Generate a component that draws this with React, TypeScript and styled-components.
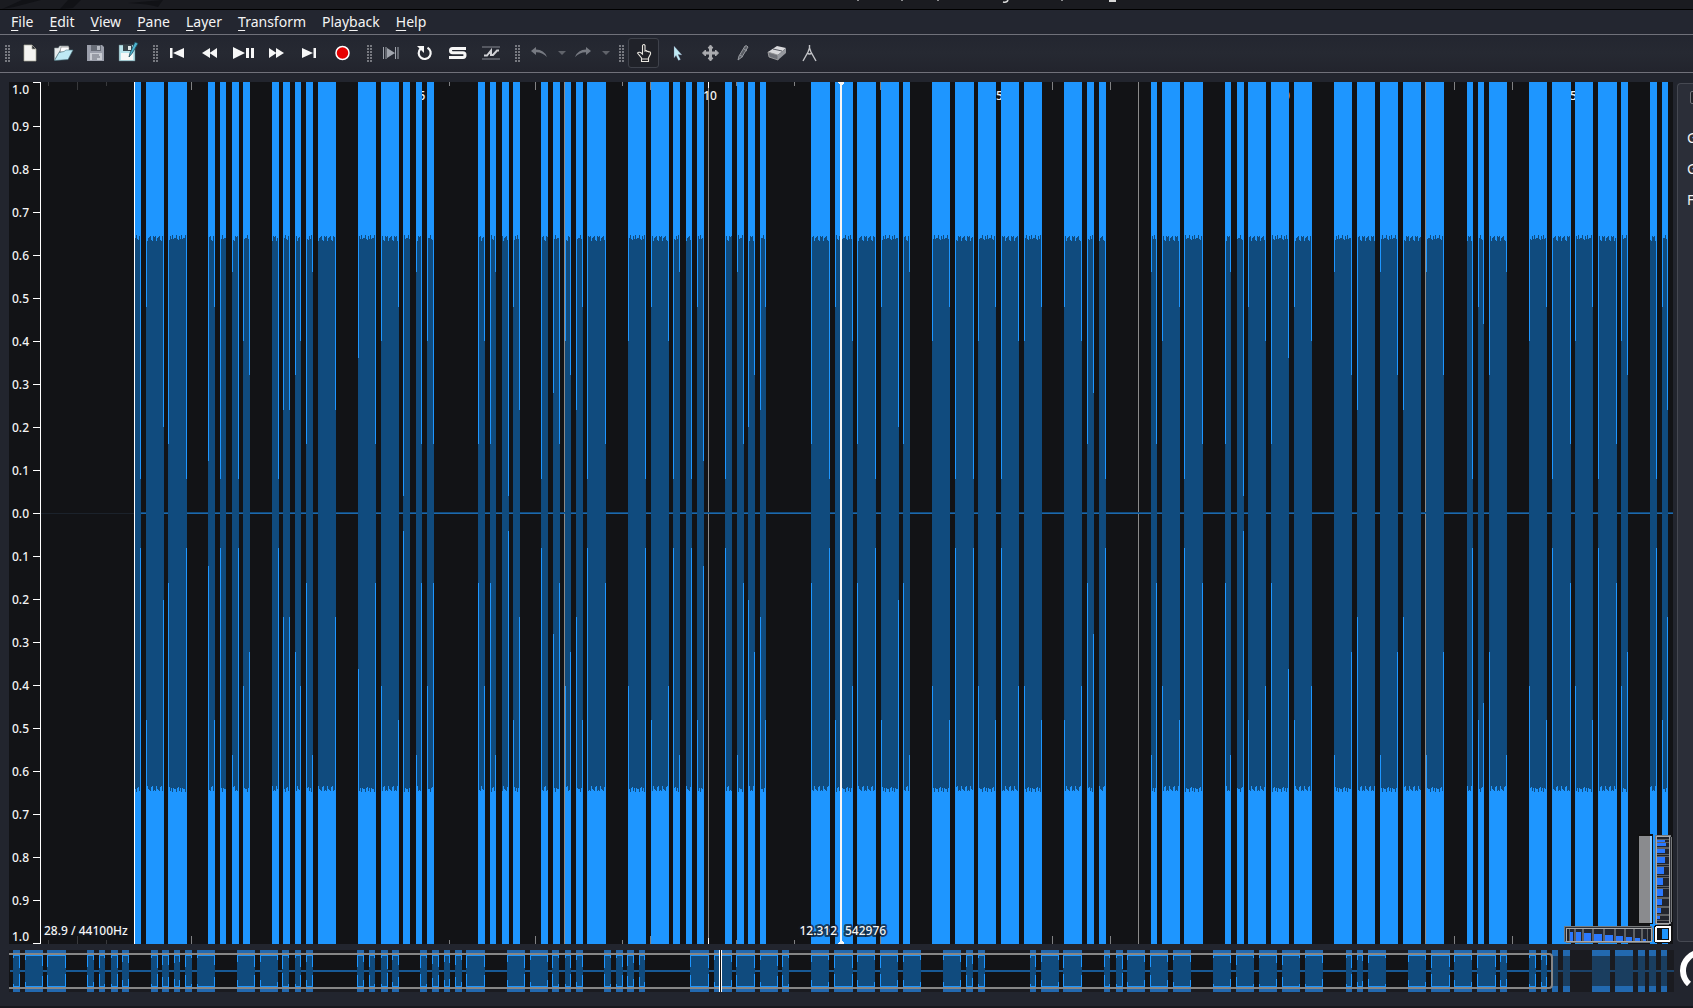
import React from "react";
import styled, { createGlobalStyle } from "styled-components";

const Global = createGlobalStyle`
  * { box-sizing: border-box; }
  body { margin: 0; background: #22252e; overflow: hidden; font-family: "Noto Sans", "Open Sans", sans-serif; color: #f4f4f4; }
  button { font: inherit; color: inherit; background: none; border: 0; padding: 0; margin: 0; }
  svg { display: block; }
`;

const Shell = styled.div`
  display: flex;
  flex-direction: column;
  height: 100vh;
  background: #22252e;
  border-bottom: 2px solid #17181e;
  overflow: hidden;
`;

const TitleStrip = styled.div`
  flex: none;
  height: 10px;
  background: #1a1b20;
  border-bottom: 1px solid #000;
  overflow: hidden;
`;

const MenuBar = styled.nav`
  flex: none;
  display: flex;
  align-items: center;
  height: 25px;
  padding-left: 3px;
  background: #232630;
  border-bottom: 1px solid #70717a;
`;

const MenuItem = styled.button`
  padding: 0 8px;
  font-size: 14px;
  line-height: 20px;
  text-underline-offset: 3px;
`;

const Mnemonic = styled.span`
  text-decoration: underline;
  text-decoration-thickness: 1px;
`;

const Toolbar = styled.div`
  flex: none;
  display: flex;
  align-items: center;
  height: 38px;
  padding-bottom: 1px;
  background: linear-gradient(#232630, #262932 50%, #22242d);
  border-bottom: 1px solid #70717a;
`;

const Grip = styled.div<{ $first?: boolean }>`
  width: ${(p) => (p.$first ? 13 : 16)}px;
  height: 16px;
  padding-right: 3px;
  display: flex;
  justify-content: flex-end;
`;

const ToolButton = styled.button<{ $narrow?: boolean; $checked?: boolean }>`
  display: flex;
  align-items: center;
  justify-content: center;
  width: ${(p) => (p.$narrow ? 11 : p.$checked ? 31 : 33)}px;
  height: 30px;
  margin: 0 ${(p) => (p.$checked ? 1 : 0)}px;
  border: ${(p) => (p.$checked ? "1px solid #3f424b" : "0")};
  border-radius: 3px;
  background: ${(p) => (p.$checked ? "#202229" : "transparent")};
`;

const Workspace = styled.main`
  flex: 1;
  min-height: 0;
  display: flex;
  gap: 4px;
  padding: 9px 0 0 9px;
`;

const Pane = styled.section`
  position: relative;
  flex: 1;
  min-width: 0;
  background: #121316;
`;

const Chart = styled.svg`
  display: block;
  width: 100%;
  height: 100%;
  overflow: visible;
`;

const Wheels = styled.svg`
  position: absolute;
  right: 1px;
  bottom: 0;
`;

const SidePanel = styled.aside`
  flex: none;
  width: 16px;
  margin: 1px 0 2px;
  padding: 7px 0 0 9px;
  border: 1px solid #464952;
  border-right: 0;
  border-radius: 4px 0 0 4px;
  background: #2b2e38;
  overflow: hidden;
`;

const CheckBox = styled.input`
  appearance: none;
  display: block;
  width: 13px;
  height: 13px;
  margin: 0 0 18px 3px;
  border: 1px solid #74767c;
  border-radius: 2px;
  background: #202127;
`;

const PropertyLabel = styled.div`
  font-size: 14px;
  line-height: 31px;
  white-space: nowrap;
`;

const OverviewRow = styled.div`
  flex: none;
  display: flex;
  height: 62px;
  padding: 6px 0 14px 9px;
`;

const Overview = styled.div`
  flex: 1;
  min-width: 0;
  background: #1a1b20;
`;

const Knob = styled.svg`
  flex: none;
`;

/* start, end, and the level (in hundredths) the bright edge reaches on each side */
const segments: number[][] = [
  [135, 141, 64, 8], [146, 164, 48, 20], [168, 187, 16, 8], [208, 215, 12, 48], [220, 226, 8, 64],
  [232, 239, 56, 8], [243, 250, 40, 32], [272, 279, 64, 8], [283, 290, 24, 24], [295, 301, 32, 40],
  [306, 313, 16, 56], [318, 336, 64, 24], [358, 376, 36, 16], [381, 399, 40, 48], [403, 410, 4, 64],
  [416, 422, 56, 16], [427, 434, 40, 16], [478, 485, 16, 40], [490, 496, 16, 56], [502, 509, 64, 4],
  [513, 520, 48, 24], [541, 548, 8, 64], [553, 560, 28, 16], [565, 571, 40, 32], [576, 583, 24, 48],
  [587, 606, 8, 16], [628, 646, 40, 8], [651, 669, 48, 40], [673, 680, 8, 56], [686, 692, 64, 8],
  [697, 704, 48, 12], [725, 732, 8, 64], [737, 744, 56, 16], [748, 755, 20, 32], [760, 766, 24, 48],
  [811, 830, 16, 8], [835, 853, 48, 40], [857, 876, 16, 8], [881, 899, 48, 20], [903, 910, 16, 56],
  [932, 950, 40, 48], [955, 974, 8, 8], [978, 996, 40, 48], [1001, 1019, 8, 40], [1024, 1042, 40, 48],
  [1064, 1082, 48, 40], [1087, 1094, 16, 28], [1099, 1106, 64, 8], [1151, 1157, 56, 16], [1162, 1180, 40, 48],
  [1184, 1203, 8, 16], [1225, 1231, 16, 56], [1237, 1244, 64, 4], [1248, 1266, 48, 40], [1271, 1289, 16, 36],
  [1294, 1312, 48, 40], [1334, 1352, 56, 32], [1357, 1375, 24, 64], [1380, 1398, 56, 32], [1403, 1421, 24, 64],
  [1426, 1444, 56, 32], [1467, 1473, 64, 8], [1478, 1484, 48, 44], [1489, 1507, 32, 56], [1529, 1547, 40, 48],
  [1552, 1571, 8, 16], [1575, 1593, 40, 48], [1598, 1617, 8, 16], [1621, 1628, 40, 32], [1650, 1657, 64, 8],
  [1662, 1668, 48, 24],
];

const tail: number[][] = [
  [1552, 1558], [1563, 1570], [1592, 1610], [1615, 1633], [1638, 1645], [1649, 1656], [1661, 1667],
];

const OVERVIEW_SHIFT = 121;
const ZERO = 513;
const jagA = [3, 0, 4, 5, 1, 4, 0, 4, 3];
const jagB = [2, 1, 6, 3, 2, 1, 5, 6, 1];

function corePath([a, b]: number[], i: number) {
  const jag = i % 2 ? jagB : jagA;
  let top = "";
  let bottom = "";
  for (let x = a; x < b; x++) {
    const d = 235 + jag[(x - a + i) % jag.length];
    top += `V${d}H${x + 1}`;
    bottom = `H${x + 1}V${2 * ZERO - d + 1}` + bottom;
  }
  return `M${a} ${ZERO}${top}V${ZERO}${bottom}H${a}Z`;
}

const ticks: [number, number][] = [
  [48, 4], [77, 8], [106, 4], [191, 8], [449, 4], [535, 8], [622, 4], [650, 8], [736, 4],
  [794, 4], [880, 8], [1052, 8], [1110, 8], [1454, 8], [1512, 8],
];

const seconds: [number, string][] = [[422, "5"], [710, "10"], [996, "15"], [1283, "20"], [1570, "25"]];

const levels = Array.from({ length: 21 }, (_, i) => ({
  y: 83 + 43 * i,
  text: (Math.abs(10 - i) / 10).toFixed(1),
}));

function WavePane() {
  return (
    <Chart viewBox="9 82 1664 862" preserveAspectRatio="none" shapeRendering="crispEdges" fontFamily="Noto Sans" fontSize="12" fontWeight="500" fill="#f4f4f4">
      <rect x="9" y="82" width="1664" height="862" fill="#121316" />
      <rect x="41" y="513" width="93" height="1" fill="#1b222b" />
      {[564, 708, 1138, 1425].map((x) => (
        <rect key={x} x={x} y="82" width="1" height="862" fill="#8a8a8a" />
      ))}
      <rect x="708" y="82" width="1" height="6" fill="#fff" />
      <rect x="708" y="938" width="1" height="6" fill="#fff" />
      {ticks.map(([x, h]) => (
        <g key={x} fill={x < 134 ? "#38393c" : "#808183"}>
          <rect x={x} y="82" width="1" height={h} />
          <rect x={x} y={944 - h} width="1" height={h} />
        </g>
      ))}
      {seconds.map(([x, s]) => (
        <text key={s} x={x} y="100" textAnchor="middle">{s}</text>
      ))}
      <rect x="141" y="512" width="1532" height="1" fill="#124a7b" />
      <rect x="141" y="513" width="1532" height="1" fill="#1d69ad" />
      {segments.map((s, i) => {
        const [a, b, l, r] = s;
        return (
          <g key={a}>
            <rect x={a} y="82" width={b - a} height="862" fill="#1e96ff" />
            <path d={corePath(s, i)} fill="#104b7e" />
            {[[a, l], [b - 1, r]].map(([x, v], k) => {
              if (v >= 64) return null;
              const h = Math.round(278 - v * 4.3);
              return (
                <g key={k} fill="#1e96ff">
                  <rect x={x} y="235" width="1" height={h} />
                  <rect x={x} y={792 - h} width="1" height={h} />
                </g>
              );
            })}
          </g>
        );
      })}
      <rect x="134" y="82" width="1" height="862" fill="#fff" />
      <rect x="40" y="82" width="1" height="862" fill="#fff" />
      {levels.map(({ y, text }, i) => (
        <g key={y}>
          <rect x="33" y={i === 0 ? 82 : y} width="7" height="1" fill="#fff" />
          <text x="12" y={i === 0 ? 94 : i === 20 ? 941 : y + 5}>{text}</text>
        </g>
      ))}
      <rect x="840" y="82" width="2" height="862" fill="#f6f6f6" />
      <path d="M838 82h6v1l-2 2h-2l-2-2zM838 944h6v-1l-2-2h-2l-2 2z" fill="#f6f6f6" />
      <g stroke="#12171f" strokeOpacity="0.7" strokeWidth="4" strokeLinejoin="round" paintOrder="stroke">
        <text x="44" y="935">28.9 / 44100Hz</text>
        <text x="837" y="935" textAnchor="end">12.312</text>
        <text x="845" y="935">542976</text>
      </g>
    </Chart>
  );
}

function OverviewChart() {
  return (
    <Chart viewBox="9 950 1665 42" preserveAspectRatio="none" shapeRendering="crispEdges">
      <rect x="9" y="955" width="1543" height="32" fill="#121316" />
      <rect x="10" y="970" width="1543" height="2" fill="#185a96" />
      <rect x="1552" y="970" width="122" height="2" fill="#1b436b" />
      {segments.map(([a, b, l, r]) => {
        const x = a - OVERVIEW_SHIFT - (a === 135 ? 1 : 0);
        const w = b - OVERVIEW_SHIFT - x;
        return (
          <g key={a}>
            <rect x={x} y="950" width={w} height="42" fill="#2269b0" />
            <rect x={x} y="955" width={w} height="32" fill="#1e96ff" />
            <rect x={x} y="956" width={w} height="30" fill="#104b7e" />
            {[[x, l], [x + w - 1, r]].map(([ex, v], k) => {
              const h = Math.max(3, Math.round(15 - v * 0.21));
              return (
                <g key={k} fill="#1e96ff">
                  <rect x={ex} y="955" width="1" height={h} />
                  <rect x={ex} y={987 - h} width="1" height={h} />
                </g>
              );
            })}
          </g>
        );
      })}
      {tail.map(([a, b]) => (
        <g key={a}>
          <rect x={a} y="950" width={b - a} height="42" fill="#2269b0" />
          <rect x={a} y="956" width={b - a} height="30" fill="#1a3e60" />
        </g>
      ))}
      <path d="M9 954H1549Q1552 954 1552 957V985Q1552 988 1549 988H9" fill="none" stroke="#868686" strokeWidth="2" shapeRendering="auto" />
      <rect x="719" y="950" width="1" height="42" fill="#fff" />
      <rect x="720" y="950" width="1" height="42" fill="#111" />
      <rect x="721" y="950" width="1" height="42" fill="#fff" />
    </Chart>
  );
}

const vCells: number[][] = [[3, 2, 8], [6, 3, 9], [12, 4, 8], [20, 6, 8], [30, 7, 7], [41, 7, 6], [52, 7, 6], [62, 6, 5], [71, 5, 4], [79, 3, 3]];
const hCells: number[][] = [[5, 3, 9], [11, 5, 9], [19, 7, 8], [29, 8, 7], [40, 8, 6], [51, 7, 5], [61, 6, 4], [70, 5, 3], [78, 3, 2]];

function ThumbWheels() {
  return (
    <Wheels width="110" height="110" viewBox="1562 834 110 110" shapeRendering="crispEdges" role="img" aria-label="Zoom wheels">
      <rect x="1638" y="834" width="15" height="90" fill="#111" />
      <rect x="1639" y="836" width="13" height="87" fill="#8a8b8e" />
      <rect x="1650" y="836" width="2" height="87" fill="#8ecaff" />
      <rect x="1655" y="835" width="16" height="89" rx="2" fill="#303238" stroke="#77797b" />
      <rect x="1656" y="836" width="13" height="87" fill="#1e2129" stroke="#a9aaab" />
      {vCells.map(([y, h, w]) => (
        <g key={y}>
          <rect x="1657" y={836 + y} width="12" height={h + 3} fill="#5f6164" />
          <rect x="1657" y={837 + y} width="12" height={h + 1} fill="#22252e" />
          <rect x="1657" y={837 + y} width={w} height={h} fill="#2a78ff" />
        </g>
      ))}
      <rect x="1564" y="926" width="88" height="16" rx="2" fill="#303238" stroke="#77797b" />
      <rect x="1566" y="928" width="85" height="13" fill="#1e2129" stroke="#a9aaab" />
      {hCells.map(([x, w, h]) => (
        <g key={x}>
          <rect x={1564 + x} y="929" width={w + 3} height="12" fill="#5f6164" />
          <rect x={1565 + x} y="929" width={w + 1} height="12" fill="#22252e" />
          <rect x={1565 + x} y={941 - h} width={w} height={h} fill="#2a78ff" />
        </g>
      ))}
      <rect x="1656" y="927" width="13" height="14" fill="#121316" />
      <rect x="1662" y="927" width="6" height="14" fill="#1e96ff" />
      <rect x="1656" y="927" width="14" height="14" rx="1" fill="none" stroke="#111" strokeWidth="4" />
      <rect x="1656" y="927" width="14" height="14" rx="1" fill="none" stroke="#fff" strokeWidth="2" />
    </Wheels>
  );
}

const GripDots = () => (
  <svg width="5" height="17" fill="#777980" shapeRendering="crispEdges">
    {[0, 3, 6, 9, 12, 15].map((y) => (
      <path key={y} d={`M0 ${y}h2v2h-2zM3 ${y}h2v2h-2z`} />
    ))}
  </svg>
);

const icons: Record<string, React.ReactNode> = {
  "New": <path d="M4 2h8l4 4v12H4z M12 2v4h4" fill="#f4f4f2" stroke="#a9a99c" strokeWidth=".7" />,
  "Open": (
    <>
      <path d="M1.500 17V5h4l1-2h9v4h-8z" fill="#e8ecec" stroke="#8d9aa0" strokeWidth=".6" />
      <path d="M8 4h8v5H7z" fill="#fff" stroke="#777" strokeWidth=".6" />
      <path d="M1.500 17.500L6 9.500l5-1 2-1.500h7l-5 9.500z" fill="#bfe9f4" stroke="#4d7680" strokeWidth=".6" />
    </>
  ),
  "Save": (
    <>
      <path d="M1 2h15l2 2v14H1z" fill="#9b9fab" />
      <path d="M5 2h10v6H5z" fill="#696e78" /><path d="M11 3h3v4h-3z" fill="#b8bcc4" />
      <path d="M4 10h12v7H4z" fill="#c9ccd3" /><path d="M6 12h7M6 14h8M6 16h5" stroke="#666b76" />
    </>
  ),
  "Save As": (
    <>
      <path d="M0 2h14l2 2v14H0z" fill="#b8e4ec" stroke="#58727a" strokeWidth=".5" />
      <path d="M4 2h9v6H4z" fill="#384349" /><path d="M9 3h3v4H9z" fill="#dfe8ea" /><path d="M2 10h12v7H2z" fill="#f6f8f7" />
      <path d="M10 14l1-4 5-11 3 1.500-6 10z" fill="#4fb5d1" stroke="#1d4b5a" strokeWidth=".8" />
    </>
  ),
  "Rewind to Start": <path d="M2 5h2.500v10H2zM16 5v10L5 10z" fill="#f7f7f7" />,
  "Rewind": <path d="M9 5v10L1 10zM16 5v10L8.500 10z" fill="#f7f7f7" />,
  "Play / Pause": <path d="M-1 4l12 6-12 6zM12 5h3v10h-3zM17 5h3v10h-3z" fill="#f7f7f7" />,
  "Fast Forward": <path d="M2 5v10l7.500-5zM9 5v10l8-5z" fill="#f7f7f7" />,
  "Fast Forward to End": <path d="M2 5v10l11-5zM13.500 5H16v10h-2.500z" fill="#f7f7f7" />,
  "Record": <circle cx="9.500" cy="10" r="6.500" fill="#e60000" stroke="#fff" strokeWidth="1.500" />,
  "Constrain Playback": <path d="M1 4h1v12H1zM3.500 4h1v12h-1zM13 4h1v12h-1zM15.500 4h1v12h-1zM5 5v10l8-5z" fill="#a1a5ad" />,
  "Loop": (
    <>
      <path d="M12.500 4.700A6 6 0 1 1 5.500 5.700" fill="none" stroke="#f7f7f7" strokeWidth="2.200" />
      <path d="M2 3h7v7z" fill="#f7f7f7" />
    </>
  ),
  "Solo": <path d="M18 5.500H4.500Q2.500 5.500 2.500 7.500Q2.500 9.800 4.500 9.800H15Q17 9.800 17 12Q17 14.500 15 14.500H1" fill="none" stroke="#f7f7f7" strokeWidth="3" />,
  "Align": (
    <>
      <path d="M1 4h18M1 16h18" stroke="#555861" strokeWidth="2" />
      <path d="M3 12.500h3L10 7.500v4.500h2L16 7.500h2" fill="none" stroke="#d0d1d5" strokeWidth="2" />
    </>
  ),
  "Undo": <path d="M1 8l5-4v2.500Q14 6.500 17 14Q12 9 6 9.200V12z" fill="#777a82" />,
  "Redo": <path d="M17 8l-5-4v2.500Q4 6.500 1 14Q6 9 12 9.200V12z" fill="#777a82" />,
  "Navigate": (
    <path d="M8.500 10V2.500q1.500-2 2.500 0V8q1.500-1 2 .5q1.500-.5 2 .5q2-.5 1.500 2l-2 4v3.500H7.500V15l-4-5q1.500-2 5 1z M7.500 16h7" fill="#202126" stroke="#e9e6df" strokeWidth="1.100" />
  ),
  "Select": <path d="M7 3l8 9-4-.5 2.500 5-2 1L9 12.500 7 15z" fill="#bfeaf4" stroke="#668" strokeWidth=".3" />,
  "Edit": <path d="M10.500 2l2.500 3h-1.500v4H15.500V7l3 3-3 3v-2h-4v4H13l-2.500 3L8 15h1.500v-4h-4v2l-3-3 3-3v2h4V5H8z" fill="#aaabaf" stroke="#aaabaf" />,
  "Draw": <path d="M5 17l1-4 6-10q2-1 3 1L9 14zM7 12l3 2M11 6l3 2" fill="#595c63" stroke="#96999f" />,
  "Erase": (
    <>
      <path d="M2 9l9-6 9 2-8 7z" fill="#d9d9dc" /><path d="M2 9l10 3v5L3 14z" fill="#6f7178" stroke="#aaa" strokeWidth=".8" />
      <path d="M12 12l8-7v5l-8 7z" fill="#96989e" /><path d="M7 6l9 2" stroke="#555860" />
    </>
  ),
  "Measure": <path d="M10.500 2v3M10.500 5L9 9l-5 9M10.500 5L12 9l5 9M8 10q2.500 2 5 0" fill="none" stroke="#c3c4c8" strokeWidth="1.400" />,
};

const Tool = ({ name, checked }: { name: string; checked?: boolean }) => (
  <ToolButton aria-label={name} $checked={checked}>
    <svg width="20" height="20" viewBox="0 0 20 20" overflow="visible">{icons[name]}</svg>
  </ToolButton>
);

const DropArrow = ({ name }: { name: string }) => (
  <ToolButton $narrow aria-label={name}>
    <svg width="8" height="4"><path d="M0 0h8L4 4z" fill="#60636a" /></svg>
  </ToolButton>
);

const menus: string[][] = [
  ["", "F", "ile"], ["", "E", "dit"], ["", "V", "iew"], ["", "P", "ane"],
  ["", "L", "ayer"], ["", "T", "ransform"], ["Play", "b", "ack"], ["", "H", "elp"],
];

export default function App() {
  return (
    <>
      <Global />
      <Shell>
        <TitleStrip>
          <svg width="1200" height="9">
            <path d="M2 9L22 0h19L14 7zM60 9l8-9h13l-8 8zM128 3l35-3-5 7q-8-3-30-4z" fill="#111216" />
            <path d="M857 0h2v1h-2zM901 0h2v1h-2zM937 0h2v1h-2zM1061 0h2v1h-2z" fill="#8b8c8f" />
            <path d="M1003 2q4 1 5-2" fill="none" stroke="#d8d8d8" strokeWidth="1.500" />
            <path d="M1109 0h7v2h-7z" fill="#d8d8d8" />
          </svg>
        </TitleStrip>
        <MenuBar>
          {menus.map(([before, key, after]) => (
            <MenuItem key={key}>{before}<Mnemonic>{key}</Mnemonic>{after}</MenuItem>
          ))}
        </MenuBar>
        <Toolbar>
          <Grip $first><GripDots /></Grip>
          {["New", "Open", "Save", "Save As"].map((n) => <Tool key={n} name={n} />)}
          <Grip><GripDots /></Grip>
          {["Rewind to Start", "Rewind", "Play / Pause", "Fast Forward", "Fast Forward to End", "Record"].map((n) => <Tool key={n} name={n} />)}
          <Grip><GripDots /></Grip>
          {["Constrain Playback", "Loop", "Solo", "Align"].map((n) => <Tool key={n} name={n} />)}
          <Grip><GripDots /></Grip>
          <Tool name="Undo" />
          <DropArrow name="Undo history" />
          <Tool name="Redo" />
          <DropArrow name="Redo history" />
          <Grip><GripDots /></Grip>
          <Tool name="Navigate" checked />
          {["Select", "Edit", "Draw", "Erase", "Measure"].map((n) => <Tool key={n} name={n} />)}
        </Toolbar>
        <Workspace>
          <Pane>
            <WavePane />
            <ThumbWheels />
          </Pane>
          <SidePanel>
            <CheckBox type="checkbox" aria-label="Show" />
            <PropertyLabel>G</PropertyLabel>
            <PropertyLabel>G</PropertyLabel>
            <PropertyLabel>F</PropertyLabel>
          </SidePanel>
        </Workspace>
        <OverviewRow>
          <Overview><OverviewChart /></Overview>
          <Knob width="19" height="42" viewBox="1674 950 19 42">
            <path d="M1689 984A18 18 0 1 1 1713 984" fill="none" stroke="#fff" strokeWidth="6" />
          </Knob>
        </OverviewRow>
      </Shell>
    </>
  );
}
